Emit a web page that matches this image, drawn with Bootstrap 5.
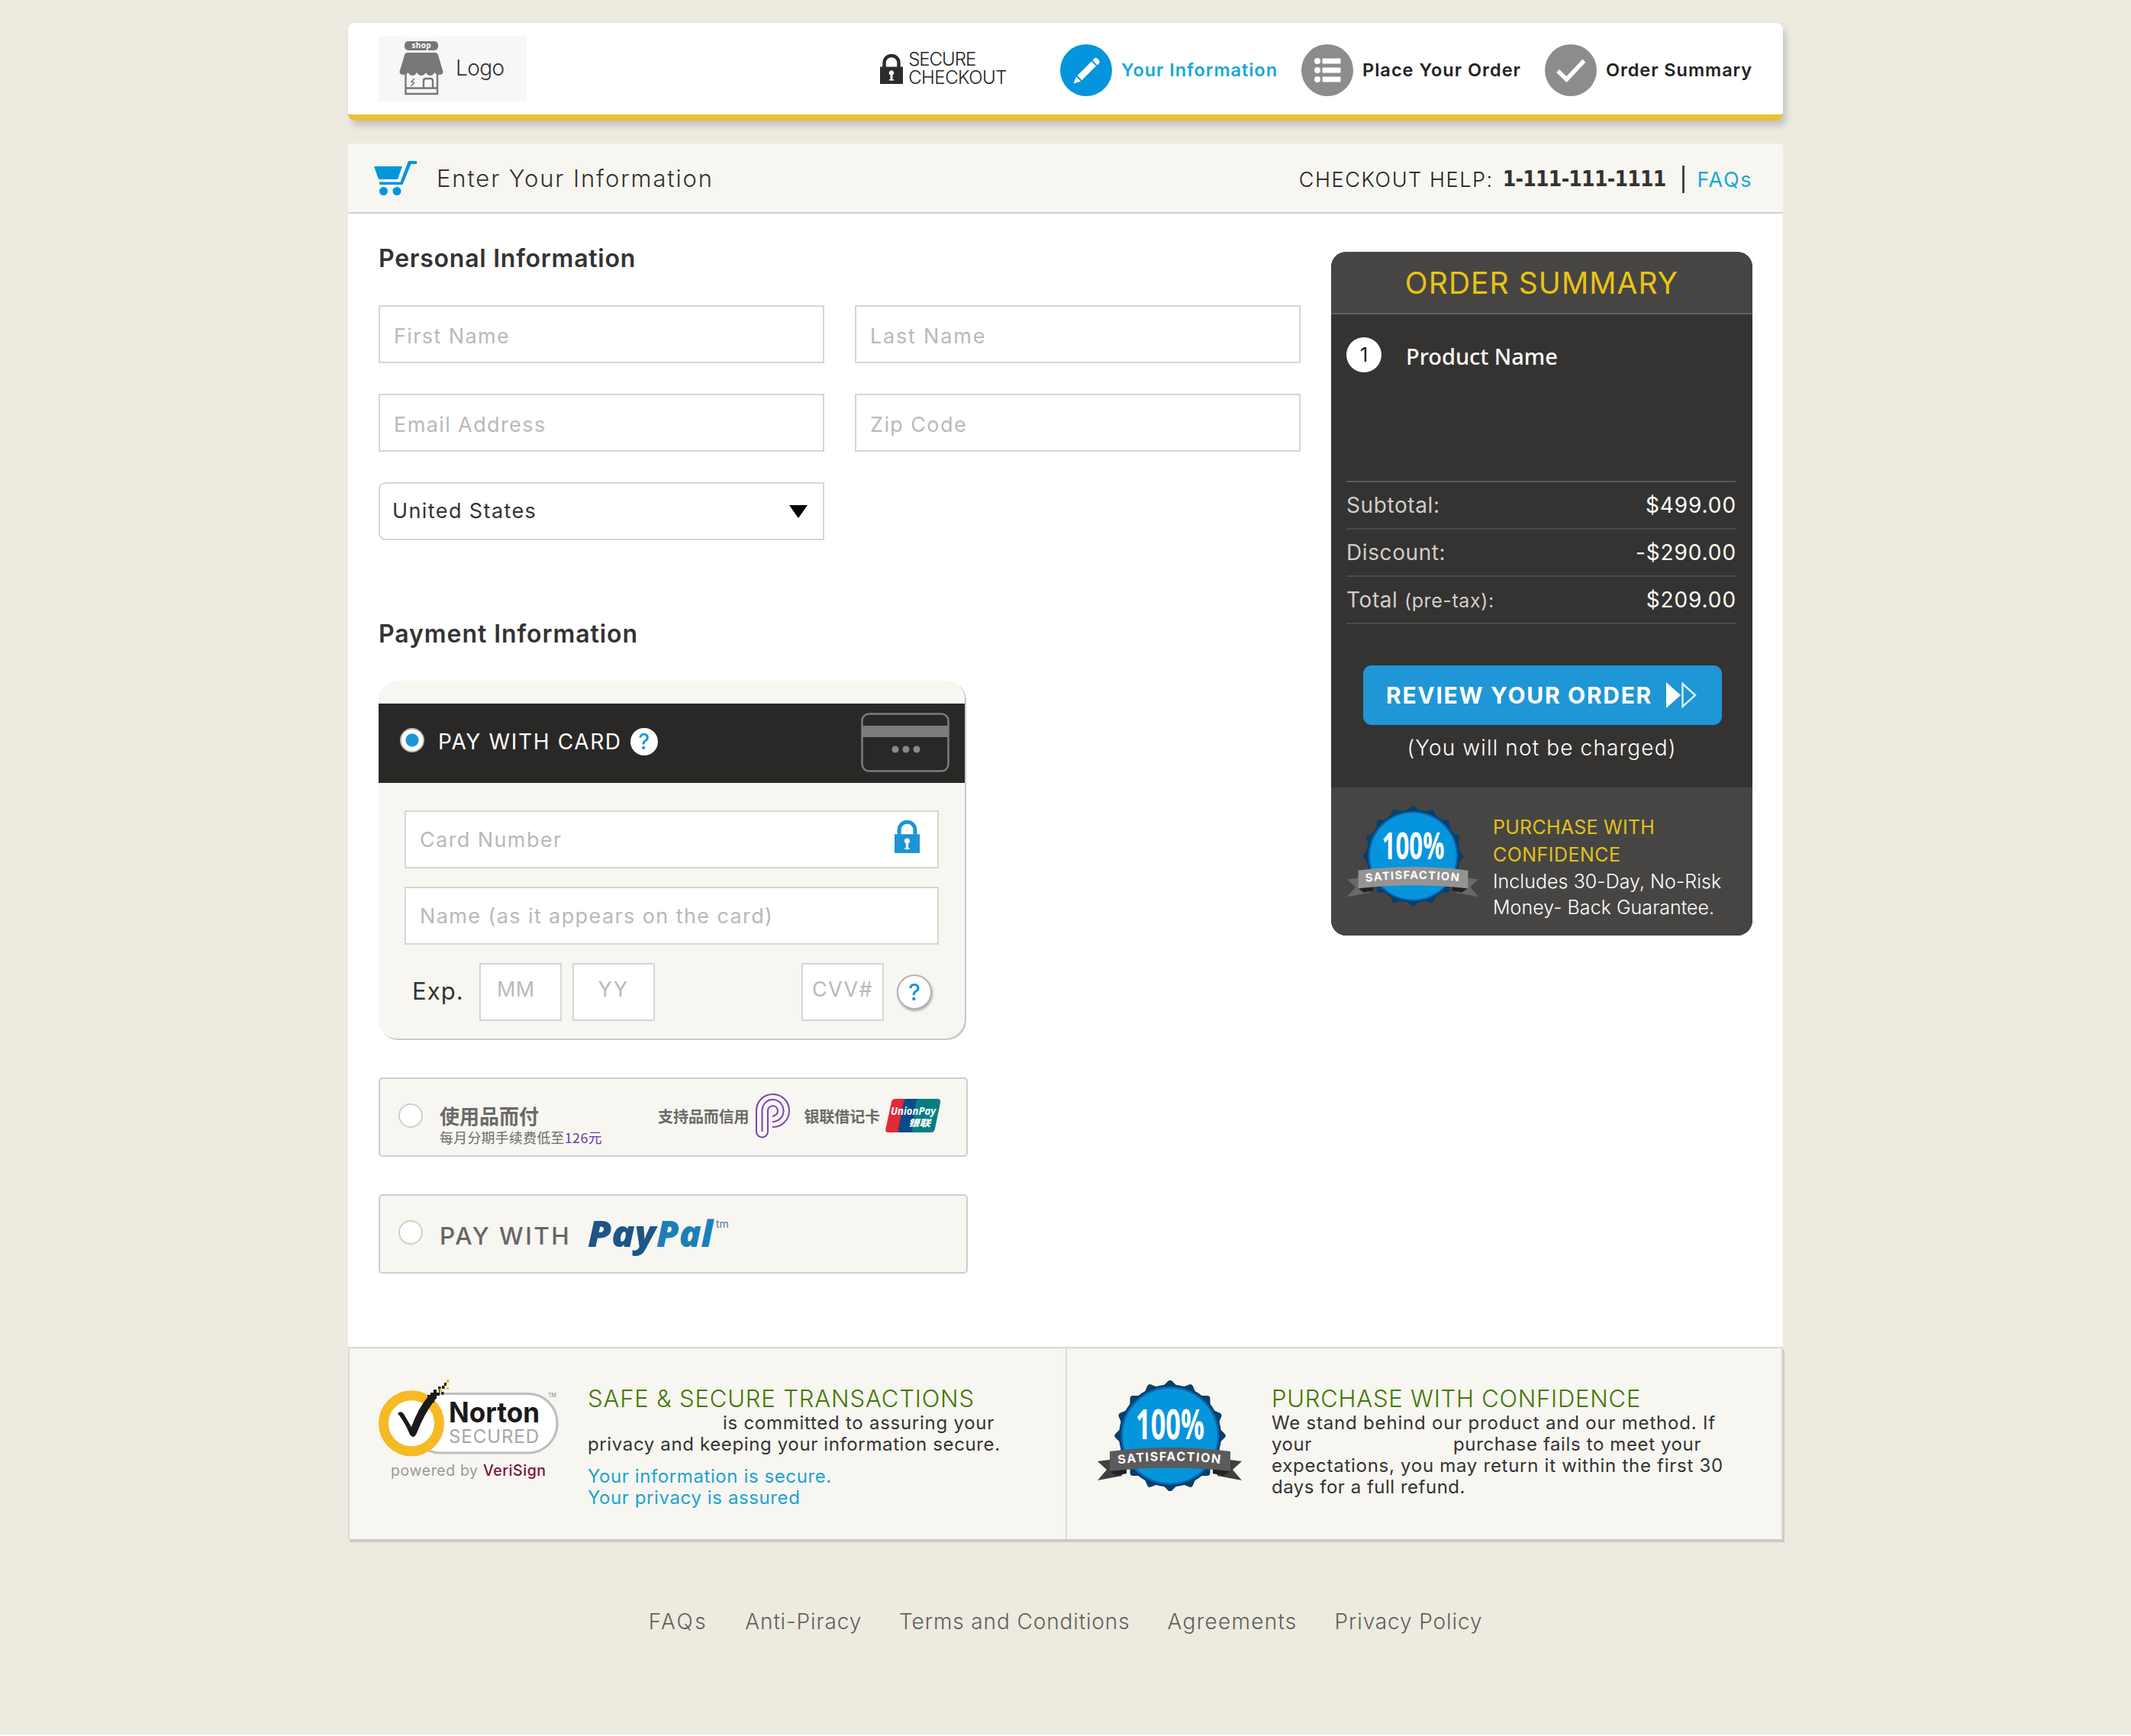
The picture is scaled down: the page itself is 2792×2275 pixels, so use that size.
<!DOCTYPE html>
<html lang="en">
<head>
<meta charset="utf-8">
<title>Secure Checkout</title>
<link href="https://cdn.jsdelivr.net/npm/bootstrap@5.3.0/dist/css/bootstrap.min.css" rel="stylesheet">
<style>
body{background:#fff;font-family:Inter,"Noto Sans CJK SC",sans-serif;color:#333;font-size:28px;line-height:1}
svg{overflow:visible;flex:none}
.page-bg{background:#edebdf;height:2273px;padding-top:30px}
.shell{width:1880px}
a{text-decoration:none}
span,a,label,h2,h3,p{white-space:nowrap}
.topbar{height:128px;padding:0 40px;border-bottom:8px solid #e9c030;border-radius:9px;box-shadow:4px 7px 9px rgba(90,90,110,.28);margin-bottom:30px}
.brand{width:194px;height:85px;background:#f7f7f7;padding:0 0 3px 27px;gap:16px}
.brand-name{font-size:28px;font-weight:300;color:#333;letter-spacing:-.6px}
.secure{gap:7px;margin-right:70px}
.secure-txt{font-size:24px;line-height:24px;font-weight:300;color:#222}
.sc1{letter-spacing:-1px}.sc2{letter-spacing:-.5px}
.steps{padding-top:3px}
.step{gap:12px;margin-left:31px;font-size:23.5px;font-weight:600;color:#222}
.step.active{color:#17a8d6}
.st1{letter-spacing:.97px}.st2{letter-spacing:1.03px}.st3{letter-spacing:.95px}
.pagehead{height:92px;background:#f7f6f0;border-bottom:2px solid #d2d2cf;padding:0 40px 0 34px}
.ph-title{font-size:31px;color:#333;margin-left:26px;font-weight:300;letter-spacing:1.88px}
.ph-right{padding-top:4px}
.ph-help{font-size:27px;font-weight:300;color:#222;letter-spacing:1.58px}
.ph-phone{font-family:"DejaVu Sans Condensed","DejaVu Sans",sans-serif;font-stretch:condensed;font-weight:700;font-size:28px;color:#333;margin-left:12px;letter-spacing:-.75px}
.ph-bar{width:3px;height:36px;background:#444;margin:0 17px 0 21px}
.ph-faq{font-size:27px;color:#17a8d6;letter-spacing:1.6px}
.mainarea{height:1485px;padding:0 40px;gap:40px}
.leftcol{width:1208px;padding-top:39px}
.sec-title{font-size:32px;line-height:40px;font-weight:600;color:#333;margin:0 0 41px;letter-spacing:.75px}
.pay-title{margin-top:103px;letter-spacing:.93px}
.fields{--bs-gutter-x:40px;--bs-gutter-y:40px}
.form-control,.form-select{height:76px;border:2px solid #d6d6d3;border-radius:0;font-size:27px;padding:4px 18px 0;color:#333;background-color:#fff;letter-spacing:1.4px}
.form-control::placeholder{color:#b9b9b9;opacity:1}
.form-control.lname{letter-spacing:1.8px}
.form-select{border-radius:9px 0 0 9px;padding:0 16px;background-image:none}
.paycard{width:770px;height:471px;background:#f7f6f1;border-radius:26px;box-shadow:inset -2px -2px 0 #c9c9c7;padding-top:30px}
.paybar{height:104px;width:768px;background:#292826;padding:0 20px 4px 28px}
.dotr{width:32px;height:32px;border-radius:50%;background:#fff;border:2px solid #cfcfcb;flex:none}
.dotr.on{border:2px solid #bbb;background:radial-gradient(circle,#1b95d8 0 8px,#fff 9px);margin-bottom:4px}
.paybar-t{font-size:28px;color:#fff;margin:0 11px 0 18px;letter-spacing:1.65px}
.cardicon{margin-top:2px}
.qm{width:36px;height:36px;border-radius:50%;background:#fff;color:#1b95d8;font-size:28px;font-weight:500;flex:none}
.qm.big{width:46px;height:46px;border:2px solid #b5b5b2;font-size:30px;box-shadow:1px 2px 3px rgba(0,0,0,.3);margin:0 9px 0 17px}
.payform{padding:36px 36px 0 34px}
.payform .form-control{width:700px;padding-top:0}
.cardlock{right:25px;top:12px}
.payform .form-control.sm{width:108px;padding:0 0 8px;text-align:center}
.payform .form-control.mm{padding-right:12px;letter-spacing:.6px}
.yy{margin-left:14px;letter-spacing:2px}
.exp{font-size:31px;color:#333;margin:0 20px 3px 10px;letter-spacing:1.1px}
.opt{width:772px;height:104px;background:#f7f6f1;border:2px solid #cfcfcc;border-radius:5px;margin-top:49px;padding-left:24px}
.opt .dotr{margin-top:32px}
.cn{font-family:"Noto Sans CJK SC",sans-serif;color:#6a6a6a}
.cn-main{margin:33px 0 0 22px}
.cn1{font-size:26px;font-weight:700;line-height:30px;letter-spacing:0}
.cn2{font-size:17.8px;line-height:27px;letter-spacing:.42px}
.cn2 b{font-weight:400;color:#6b35a3}
.cn3{font-size:20px;font-weight:700;letter-spacing:-.1px;margin-top:39px}
.cn3.a{margin-right:8px}.cn3.b{margin-left:19px;margin-right:7px}
.plogo{margin-top:19px}.uplogo{margin:26px 34px 0 0}.pplogo{margin-top:32px}
.pw{font-size:31.5px;color:#666;font-weight:500;letter-spacing:2.5px;margin:37px 22px 0 22px}
.order{width:552px;height:896px;margin-top:50px;background:#353331;border-radius:20px;overflow:hidden;color:#fff}
.order-h{height:82px;background:#474543;border-bottom:2px solid #62605e}
.ot{font-size:39px;color:#e9c412;letter-spacing:1.05px}
.order-item{height:218px;padding:30px 20px 0}
.qty{width:46px;height:46px;border-radius:50%;background:#fff;color:#222;font-size:26px;margin-right:32px;flex:none}
.pname{font-family:"Noto Sans",sans-serif;font-size:29px;font-weight:500;line-height:50px;letter-spacing:-.05px}
.sums{margin:0 20px;width:510px;border-top:2px solid #5d5b59}
.sumrow{height:62px;border-bottom:2px solid #4c4a48;color:#cfcecd;font-size:28px;letter-spacing:.6px}
.sumrow span:last-child{color:#fff;letter-spacing:.9px;margin-right:-1px}
.sumrow .v2{letter-spacing:.63px}
.pt{font-size:25px}
.review{width:470px;height:78px;background:#1f96d6;border:0;border-radius:11px;margin:54px 0 0 42px;color:#fff;padding:0 33px 0 30px}
.rv{font-size:30px;font-weight:700;letter-spacing:1.7px}
.nochg{height:82px;padding-top:16px}
.nc{font-size:28px;font-weight:300;letter-spacing:1.14px}
.order-f{height:194px;background:#474543;padding:24px 20px 0 21px}
.conf{margin:10px 0 0 19px}
.conf-t{color:#e0c21a;font-size:25px;line-height:36px;letter-spacing:.24px}
.conf-t+.conf-t{letter-spacing:.45px}
.conf-b{font-size:25px;line-height:34px;font-weight:300;letter-spacing:.04px}
.assure{height:252px;border:2px solid #d9dad2;border-bottom:0;background:#f7f6f1;box-shadow:2px 4px 0 #cbcbc6}
.as-l{width:940px;border-right:2px solid #d9dad2;padding:41px 0 0 38px;gap:38px}
.as-r{padding:42px 0 0 40px;gap:39px}
.as-txt{padding-top:9px}
.as-r .as-txt{padding-top:8px}
.as-h{font-size:31px;line-height:32px;color:#437800;margin:0 0 2px;font-weight:300;letter-spacing:.86px}
.as-r .as-h{letter-spacing:.76px}
.as-p{font-size:24px;line-height:28px;color:#333}
.as-b{color:#1ba3d0;margin-top:14px;letter-spacing:.6px}
.p1{margin-left:177px;letter-spacing:.73px}.p2{letter-spacing:.63px}
.q1{letter-spacing:.8px}.q2{letter-spacing:.59px}.q3{margin-left:185px;letter-spacing:.62px}.q4{letter-spacing:.72px}.q5{letter-spacing:.51px}
.fnav{margin-top:88px;gap:49px}
.fnav a{font-size:28px;line-height:40px;color:#62615d;font-weight:300;letter-spacing:.88px}
.fnav a:first-child{letter-spacing:2.5px}
.fnav a:nth-child(4){letter-spacing:1.27px}
.tail{fill:var(--tail)}.band{fill:var(--band)}
.seal-light{--tail:#6b6968;--band:#949494}
.seal-dark{--tail:#404040;--band:#5b5b5b}
</style>
<script src="https://cdn.jsdelivr.net/npm/bootstrap@5.3.0/dist/js/bootstrap.bundle.min.js"></script>
</head>
<body>
<svg width="0" height="0" class="position-absolute">
<defs>
<symbol id="seal" viewBox="0 0 189 145">
<g fill="#093f69" stroke="#093f69" stroke-width="8" stroke-linejoin="round">
<rect x="46.500" y="24" width="97" height="97"/><rect x="46.500" y="24" width="97" height="97" transform="rotate(22.500 95 72.500)"/>
<rect x="46.500" y="24" width="97" height="97" transform="rotate(45 95 72.500)"/><rect x="46.500" y="24" width="97" height="97" transform="rotate(67.500 95 72.500)"/></g>
<circle cx="95" cy="72.500" r="67" fill="#093f69"/>
<circle cx="95" cy="72.500" r="64.500" fill="#0b66b4"/><circle cx="95" cy="72.500" r="62" fill="#0595dd"/>
<path class="tail" d="M0 106L32 102V125L0 131L12 117ZM189 106L157 102V125L189 131L177 117Z"/>
<path d="M16 119L38 115V122L24 125ZM173 119L151 115V122L165 125Z" fill="#222"/>
<path class="band" d="M16 93Q95 83 174 93V119Q95 110 16 119Z"/>
<path id="arc" d="M27 109.500Q95 101 164 109.500" fill="none"/>
<text x="50" y="77" font-family="Open Sans" font-weight="700" font-size="54" fill="#fff" textLength="90" lengthAdjust="spacingAndGlyphs">100%</text>
<text font-family="Inter" font-weight="700" font-size="16" fill="#fff" textLength="134"><textPath href="#arc">SATISFACTION</textPath></text>
</symbol>
<symbol id="lock" viewBox="0 0 30 40"><path d="M5.500 18V13C5.500 -.5 24.500 -.5 24.500 13V18" fill="none" stroke="currentColor" stroke-width="4.500"/><path d="M0 17.500H30V40H0Z" fill="currentColor"/><path d="M13.500 28.500a3.300 3.300 0 1 1 3 0V34H18v1.500h-6V34h1.500Z" fill="#fff"/></symbol>
</defs></svg>
<div class="page-bg">
<div class="shell mx-auto">
<header class="topbar bg-white d-flex align-items-center">
<div class="brand d-flex align-items-center">
<svg width="58" height="70" viewBox="0 0 58 70" fill="#777"><rect x="7" width="44" height="12" rx="5"/><text x="16.500" y="9" font-size="10" font-weight="700" font-family="Open Sans" fill="#fff" textLength="25">shop</text><path d="M11 15H47Q50 15 51 18L57.500 40Q57.500 44 52 44Q48 44 46.500 41Q44 45 40.500 45Q37 45 35 41Q32.500 45 29 45Q25.500 45 23 41Q21 45 17.500 45Q14 45 11.500 41Q10 44 6 44Q.5 44 .5 40L7 18Q8 15 11 15Z"/><path d="M8.500 43V69H50V43M8.500 61.500H50M32 61V52Q32 49 35 49H41Q44 49 44 52V61" fill="none" stroke="#777" stroke-width="2.400"/><path d="M20 49l-4 4 3.500 1.500-4 4.500" fill="none" stroke="#777" stroke-width="1.500"/></svg>
<span class="brand-name">Logo</span></div>
<div class="secure d-flex align-items-center ms-auto"><svg width="30" height="40" color="#2c2c2c"><use href="#lock"/></svg><div class="secure-txt"><span class="sc1 d-table">SECURE</span><span class="sc2 d-table">CHECKOUT</span></div></div>
<nav class="steps d-flex align-items-center">
<div class="step active d-flex align-items-center ms-0"><svg width="68" height="68" viewBox="0 0 68 68"><circle cx="34" cy="34" r="34" fill="#0595dd"/><path d="M41 22.500L47 28.500L28.500 47L22.500 41ZM42.500 21L45 18.500Q47 17 49 19L51 21Q52.500 23 51 25L48.500 27.500ZM21 42.500L27 48.500L17.500 51.500Z" fill="#fff"/></svg><span class="st1">Your Information</span></div>
<div class="step d-flex align-items-center"><svg width="68" height="68" viewBox="0 0 68 68"><circle cx="34" cy="34" r="34" fill="#8b8c8e"/><g fill="#fff"><circle cx="21" cy="22" r="4"/><circle cx="21" cy="34" r="4"/><circle cx="21" cy="46" r="4"/><rect x="27.500" y="18.500" width="24" height="7" rx="1"/><rect x="27.500" y="30.500" width="24" height="7" rx="1"/><rect x="27.500" y="42.500" width="24" height="7" rx="1"/></g></svg><span class="st2">Place Your Order</span></div>
<div class="step d-flex align-items-center"><svg width="68" height="68" viewBox="0 0 68 68"><circle cx="34" cy="34" r="34" fill="#8b8c8e"/><path d="M17 35L28.500 46L51.500 21.500" fill="none" stroke="#fff" stroke-width="5.500"/></svg><span class="st3">Order Summary</span></div>
</nav></header>
<div class="pagehead d-flex align-items-center">
<svg width="56" height="45" viewBox="0 0 56 45" fill="#0595dd"><path d="M0 7H37L31 24H6ZM45 0H56V4H48.500L37.500 31H7V27.500H34.500Z"/><circle cx="12.500" cy="39.500" r="5.500"/><circle cx="30" cy="39.500" r="5.500"/></svg>
<span class="ph-title">Enter Your Information</span>
<div class="ph-right ms-auto d-flex align-items-center"><span class="ph-help">CHECKOUT HELP:</span><span class="ph-phone">1-111-111-1111</span><span class="ph-bar"></span><a href="#" class="ph-faq">FAQs</a></div></div>
<main class="mainarea bg-white d-flex align-items-start">
<section class="leftcol">
<h2 class="sec-title">Personal Information</h2>
<div class="row fields">
<div class="col-6"><input class="form-control" placeholder="First Name"></div>
<div class="col-6"><input class="form-control lname" placeholder="Last Name"></div>
<div class="col-6"><input class="form-control" placeholder="Email Address"></div>
<div class="col-6"><input class="form-control" placeholder="Zip Code"></div>
<div class="col-6"><div class="form-select d-flex align-items-center"><span>United States</span><svg class="ms-auto me-1" width="24" height="17"><path d="M0 0H24L12 17Z"/></svg></div></div>
</div>
<h2 class="sec-title pay-title">Payment Information</h2>
<div class="paycard">
<div class="paybar d-flex align-items-center"><span class="dotr on"></span><span class="paybar-t">PAY WITH CARD</span><span class="qm d-flex align-items-center justify-content-center">?</span>
<svg class="cardicon ms-auto" width="116" height="78" viewBox="0 0 116 78"><rect x="1.500" y="1.500" width="113" height="75" rx="9" fill="none" stroke="#7d7b7c" stroke-width="2.500"/><rect x="1" y="17" width="114" height="15" fill="#7d7b7c"/><g fill="#8a8888"><circle cx="45" cy="48" r="4.500"/><circle cx="59" cy="48" r="4.500"/><circle cx="73" cy="48" r="4.500"/></g></svg></div>
<div class="payform">
<div class="position-relative mb-4"><input class="form-control" placeholder="Card Number"><svg class="cardlock position-absolute" width="33" height="44" color="#1b95d8"><use href="#lock"/></svg></div>
<input class="form-control mb-4" placeholder="Name (as it appears on the card)">
<div class="d-flex align-items-center"><span class="exp">Exp.</span><input class="form-control sm mm" placeholder="MM"><input class="form-control sm yy" placeholder="YY"><input class="form-control sm ms-auto" placeholder="CVV#"><span class="qm big d-flex align-items-center justify-content-center">?</span></div>
</div></div>
<div class="opt d-flex"><span class="dotr"></span>
<div class="cn cn-main"><span class="cn1 d-table">使用品而付</span><span class="cn2 d-table">每月分期手续费低至<b>126元</b></span></div>
<span class="cn cn3 a ms-auto">支持品而信用</span>
<svg class="plogo" width="45" height="58" viewBox="0 0 45 58" fill="none" stroke="#7a45ab" stroke-width="2"><path d="M22 44C34 44 44 35 44 22.500C44 10 34 1 22.500 1C11 1 1 10 1 22.500V50a7 7 0 0 0 15 0V23C16 14 29 14 29 23C29 27 26 29 22 30M22 37C30 37 36.500 31 36.500 23C36.500 14 30 8 22.500 8C15 8 8.500 14 8.500 23V50"/></svg>
<span class="cn cn3 b">银联借记卡</span>
<svg class="uplogo" width="72" height="44" viewBox="0 0 72 44"><path d="M13 0H32L24 44H4Q-1 44 .5 39L8 4Q9 0 13 0Z" fill="#e02a35"/><path d="M29 0H50L42 44H20Q16 44 17 39L24 4Q25 0 29 0Z" fill="#0b4a86"/><path d="M45 0H68Q73 0 72 5L65 39Q64 44 60 44H38Q34 44 35 39L40 4Q41 0 45 0Z" fill="#067f83"/><text x="7" y="21" font-family="Open Sans" font-size="14.500" font-weight="700" font-style="italic" fill="#fff" textLength="59" lengthAdjust="spacingAndGlyphs">UnionPay</text><text x="30" y="36" font-family="Noto Sans CJK SC" font-size="12" font-weight="900" font-style="italic" fill="#fff" textLength="29" lengthAdjust="spacingAndGlyphs">银联</text></svg>
</div>
<div class="opt d-flex"><span class="dotr"></span><span class="pw">PAY WITH</span>
<svg class="pplogo" width="190" height="50" viewBox="0 0 190 50"><g font-family="Open Sans" font-weight="800" font-style="italic" font-size="47"><text x="0" y="35" fill="#1d5585" textLength="89" lengthAdjust="spacingAndGlyphs">Pay</text><text x="90" y="35" fill="#1c80b8" textLength="74" lengthAdjust="spacingAndGlyphs">Pal</text></g><text x="168" y="10" font-family="Inter" font-size="14" fill="#5a7896">tm</text></svg></div>
</section>
<aside class="order">
<div class="order-h d-flex align-items-center justify-content-center"><span class="ot">ORDER SUMMARY</span></div>
<div class="order-item d-flex"><span class="qty d-flex align-items-center justify-content-center">1</span><span class="pname">Product Name</span></div>
<div class="sums">
<div class="sumrow d-flex align-items-center justify-content-between"><span>Subtotal:</span><span>$499.00</span></div>
<div class="sumrow d-flex align-items-center justify-content-between"><span>Discount:</span><span class="v2">-$290.00</span></div>
<div class="sumrow d-flex align-items-center justify-content-between"><span>Total <small class="pt">(pre-tax):</small></span><span>$209.00</span></div>
</div>
<button class="review d-flex align-items-center justify-content-between"><span class="rv">REVIEW YOUR ORDER</span><svg width="40" height="34" viewBox="0 0 40 34"><path d="M0 0L19 17L0 34Z" fill="#fff"/><path d="M21.500 2L38 17L21.500 32Z" fill="none" stroke="#d5ecf8" stroke-width="2.500"/></svg></button>
<div class="nochg text-center"><span class="nc">(You will not be charged)</span></div>
<div class="order-f d-flex"><svg class="seal-light" width="172" height="132"><use href="#seal"/></svg>
<div class="conf"><span class="conf-t d-table">PURCHASE WITH</span><span class="conf-t d-table">CONFIDENCE</span><span class="conf-b d-table">Includes 30-Day, No-Risk</span><span class="conf-b d-table">Money- Back Guarantee.</span></div></div>
</aside>
</main>
<section class="assure d-flex">
<div class="as-l d-flex align-items-start">
<svg width="236" height="132" viewBox="0 0 236 132"><rect x="43" y="18.500" width="191" height="77.500" rx="38" fill="#fff" stroke="#bdbdbd" stroke-width="3"/><circle cx="43" cy="57.300" r="36.500" fill="#fff" stroke="#f6ba24" stroke-width="13"/><path d="M25 44Q30 40 33 45L43 62Q52 37 65 22L75 25Q60 44 50 70Q46 79 41 72Q35 57 25 44Z" fill="#1a1a1a"/><g fill="#1a1a1a"><path d="M64 24v-4h4v-3h4v-4h4v4h3v-4h4v4h-3v4h-4v4h-3v5h-4v4h-7z"/><rect x="78" y="9" width="3.500" height="3.500"/><rect x="83" y="8" width="3.500" height="4"/><rect x="86" y="4" width="3" height="4"/><rect x="82" y="16" width="3.500" height="3.500"/></g><g fill="#f6ba24"><rect x="89" y="0" width="3.500" height="4"/><rect x="80" y="13" width="3" height="4"/><rect x="89" y="10" width="3" height="3"/></g>
<g font-family="Inter"><text x="92" y="56" font-size="37" font-weight="700" fill="#1a1a1a" textLength="119" lengthAdjust="spacingAndGlyphs">Norton</text><text x="92" y="83" font-size="24" fill="#a5a5a5" textLength="118">SECURED</text><text x="222" y="23" font-size="7" fill="#888">TM</text><text x="16" y="125.500" font-size="19.500" fill="#999" textLength="114">powered by</text><text x="137" y="125.500" font-size="19.500" font-weight="500" fill="#7d1038" textLength="82">VeriSign</text></g></svg>
<div class="as-txt"><h3 class="as-h">SAFE &amp; SECURE TRANSACTIONS</h3><div class="as-p"><span class="p1 d-table">is committed to assuring your</span><span class="p2 d-table">privacy and keeping your information secure.</span></div><div class="as-p as-b"><span class="d-table">Your information is secure.</span><span class="d-table">Your privacy is assured</span></div></div>
</div>
<div class="as-r d-flex align-items-start"><svg class="seal-dark" width="189" height="145"><use href="#seal"/></svg>
<div class="as-txt"><h3 class="as-h">PURCHASE WITH CONFIDENCE</h3><div class="as-p"><span class="q1 d-table">We stand behind our product and our method. If</span><div class="d-flex"><span class="q2">your</span><span class="q3">purchase fails to meet your</span></div><span class="q4 d-table">expectations, you may return it within the first 30</span><span class="q5 d-table">days for a full refund.</span></div></div></div>
</section>
<footer class="fnav d-flex justify-content-center"><a href="#">FAQs</a><a href="#">Anti-Piracy</a><a href="#">Terms and Conditions</a><a href="#">Agreements</a><a href="#">Privacy Policy</a></footer>
</div></div>
</body></html>
